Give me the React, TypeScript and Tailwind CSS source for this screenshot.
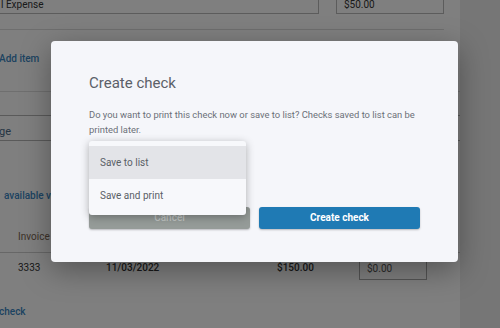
import React from 'react';

const link = 'text-[#3a86c2]';

const App: React.FC = () => {
  return (
    <div className="relative flex h-[328px] w-[500px] overflow-hidden bg-white font-['Roboto',sans-serif] text-[10px] leading-[14px]">
      {/* Page under the dialog */}
      <div className="flex w-[460px] flex-col">
        <div className="flex h-[14px] items-end">
          <div className="-ml-[10px] flex h-[26px] w-[329px] shrink-0 items-end border border-[#b9b9b9] pb-[1px] pl-[10px] text-[#333]">
            l Expense
          </div>
          <div className="ml-[17px] flex h-[26px] w-[108px] shrink-0 items-end border border-[#b9b9b9] pb-[1px] pl-[7px] text-[#333]">
            $50.00
          </div>
        </div>
        <div className="mt-[15px] w-[444px] border-t border-[#dcdcdc]" />
        <div className={`mt-[22px] -ml-[1px] font-medium ${link}`}>Add item</div>
        <div className="mt-[25px] border-t border-[#dedede]" />
        <div className="mt-[23px] flex h-[26px] items-end border-y border-[#b4b4b4] pb-[1px] text-[11px] text-[#4a6a86]">
          <span className="-ml-[1px]">ge</span>
        </div>
        <div className={`mt-[48px] pl-[4px] font-medium ${link}`}>available vendor credits</div>
        <div className="mt-[27px] pl-[18px] text-[#7a6552]">Invoice #</div>
        <div className="mt-[8px] border-t border-[#cfcfcf]" />
        <div className="mt-[2px] flex h-[26px] items-center text-[#333]">
          <span className="ml-[18px] w-[88px]">3333</span>
          <span className="w-[171px] font-medium">11/03/2022</span>
          <span className="w-[82px] font-medium">$150.00</span>
          <div className="flex h-[24px] w-[68px] items-end border border-[#a9a9a9] pb-[3px] pl-[7px] text-[#555]">
            $0.00
          </div>
        </div>
        <div className={`mt-[24px] -ml-[1px] font-medium ${link}`}>check</div>
      </div>
      <div className="flex-1 bg-[#ececec]" />

      {/* Backdrop */}
      <div className="absolute inset-0 bg-black/50" />

      {/* Dialog */}
      <div className="absolute left-[51px] top-[41px] flex h-[221px] w-[407px] flex-col rounded-[4px] bg-[#f5f6fa] px-[38px] pt-[32px] shadow-[0_8px_30px_rgba(0,0,0,0.35)]">
        <h2 className="text-[15px] leading-[20px] text-[#5b6068]">Create check</h2>
        <p className="-mr-[4px] mt-[14px] text-[9.4px] leading-[15px] text-[#6b7078]">
          Do you want to print this check now or save to list? Checks saved to list can be printed later.
        </p>
        <div className="mt-auto mb-[33px] flex gap-[9px]">
          <button className="h-[22px] flex-1 rounded-[3px] bg-[#959b98] text-[10px] font-medium text-[#bfc3c1] shadow-[0_1px_2px_rgba(0,0,0,0.25)]">
            Cancel
          </button>
          <button className="h-[22px] flex-1 rounded-[3px] bg-[#1f7ab4] text-[10px] font-bold text-white shadow-[0_1px_2px_rgba(0,0,0,0.25)]">
            Create check
          </button>
        </div>

        {/* Open menu */}
        <div className="absolute left-[38px] top-[100px] w-[157px] rounded-[3px] bg-[#f7f8fb] pb-[3px] pt-[5px] text-[10px] text-[#5a5f66] shadow-[0_2px_8px_rgba(0,0,0,0.3)]">
          <div className="flex h-[33px] items-center bg-[#e3e4e8] pl-[11px]">Save to list</div>
          <div className="flex h-[33px] items-center pl-[11px]">Save and print</div>
        </div>
      </div>
    </div>
  );
};

export default App;
